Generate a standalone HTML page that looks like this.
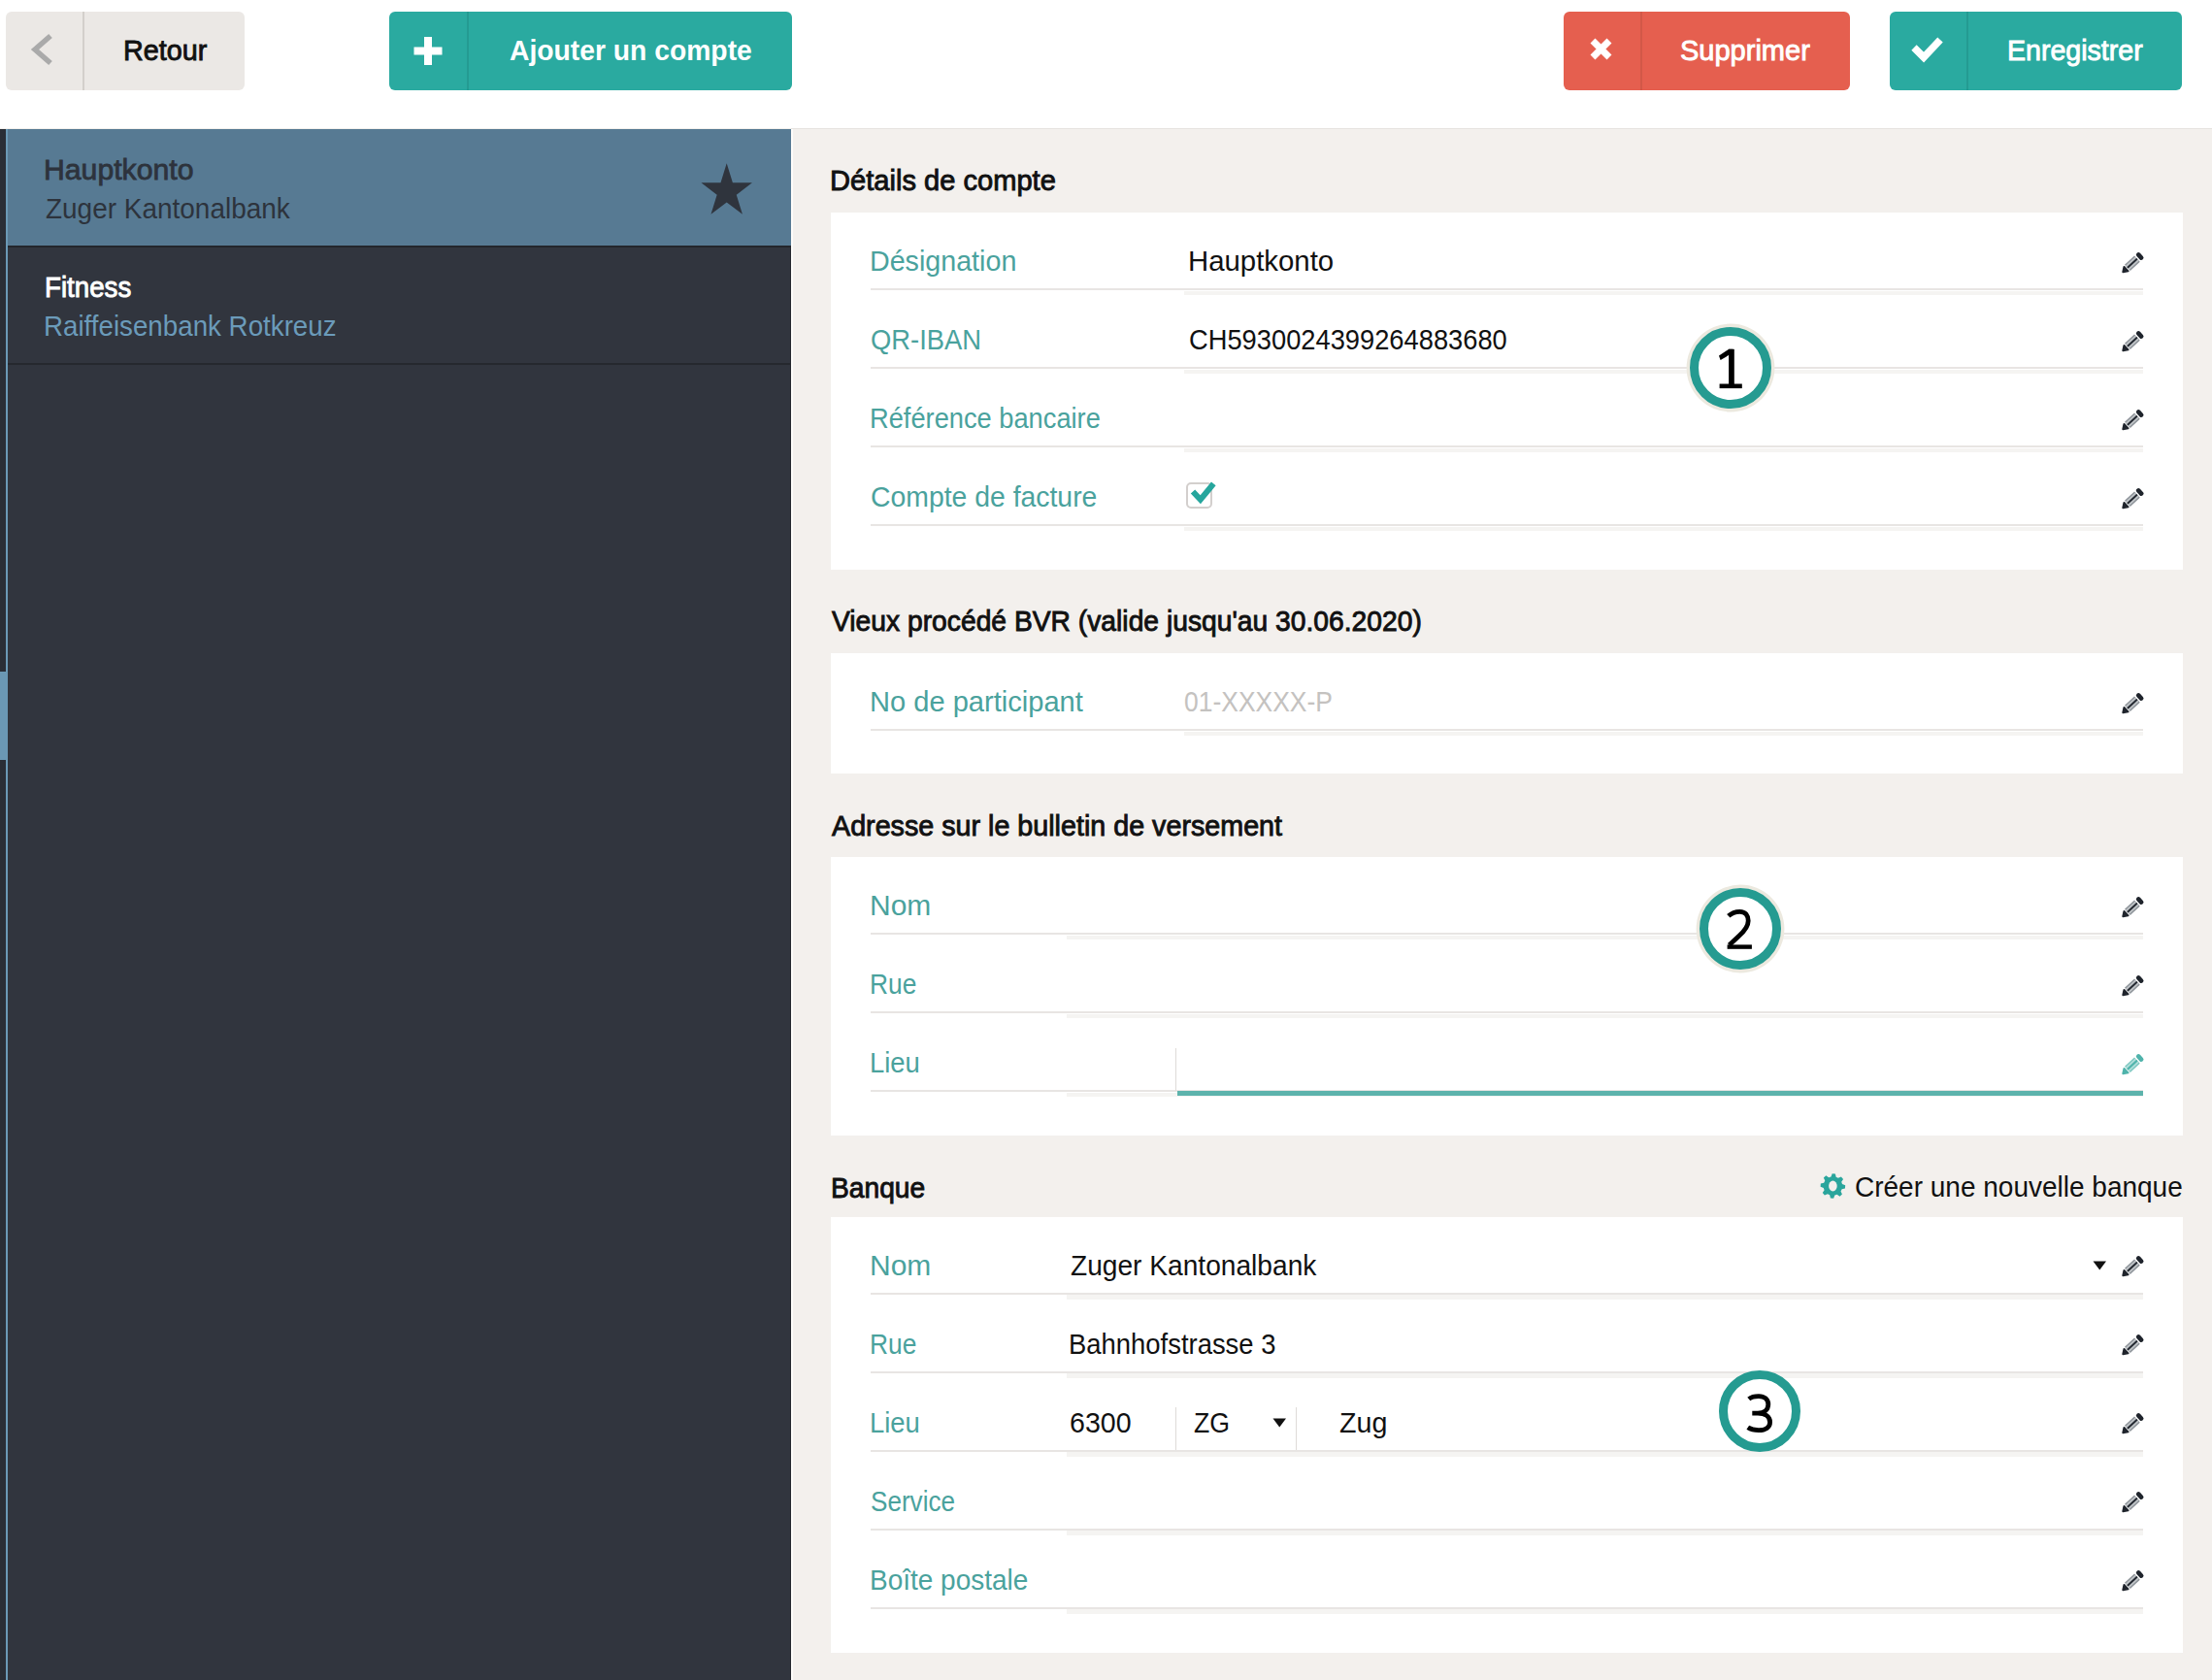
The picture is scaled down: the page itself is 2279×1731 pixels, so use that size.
<!DOCTYPE html>
<html><head><meta charset="utf-8">
<style>
html,body{margin:0;padding:0;}
body{width:2279px;height:1731px;position:relative;overflow:hidden;background:#f3f0ed;font-family:"Liberation Sans",sans-serif;}
.t{position:absolute;white-space:nowrap;}
.r{position:absolute;}
</style></head><body>
<div class="r" style="left:0.0px;top:0.0px;width:2279.0px;height:132.0px;background:#ffffff;"></div>
<div class="r" style="left:815.0px;top:132.0px;width:1464.0px;height:1.0px;background:#e6e3e0;"></div>
<div class="r" style="left:6.0px;top:12.0px;width:246.0px;height:81.0px;background:#ebe8e5;border-radius:6px;"></div>
<div class="r" style="left:85.3px;top:12.0px;width:2.0px;height:81.0px;background:#d3cfcb;"></div>
<svg class="r" style="left:28px;top:30px" width="32" height="42" viewBox="0 0 32 42"><path d="M24 7 L8 21 L24 35" fill="none" stroke="#aaaaaa" stroke-width="5.5" stroke-linecap="butt" stroke-linejoin="miter"/></svg>
<div class="t" style="left:127.49px;top:37.42px;font-size:29.5px;line-height:29.5px;font-weight:400;color:#111;-webkit-text-stroke:0.9px #111;transform:scale(0.9735,1.0);transform-origin:0 25.07px;">Retour</div>
<div class="r" style="left:401.0px;top:12.0px;width:415.0px;height:81.0px;background:#2aaaa0;border-radius:6px;"></div>
<div class="r" style="left:481.2px;top:12.0px;width:2.2px;height:81.0px;background:#249b92;"></div>
<svg class="r" style="left:426px;top:38px" width="30" height="30" viewBox="0 0 30 30"><path d="M15 0 V29 M0.5 14.5 H29.5" stroke="#fff" stroke-width="8"/></svg>
<div class="t" style="left:525.30px;top:38.14px;font-size:28.9px;line-height:28.9px;font-weight:700;color:#fff;transform:scale(0.9787,1.0);transform-origin:0 24.56px;">Ajouter un compte</div>
<div class="r" style="left:1611.0px;top:12.0px;width:295.0px;height:81.0px;background:#e55f4f;border-radius:6px;"></div>
<div class="r" style="left:1690.2px;top:12.0px;width:2.2px;height:81.0px;background:#d25848;"></div>
<svg class="r" style="left:1637px;top:38px" width="25" height="25" viewBox="0 0 25 25"><path d="M4 4 L21 21 M21 4 L4 21" stroke="#fff" stroke-width="7" stroke-linecap="butt"/></svg>
<div class="t" style="left:1731.06px;top:37.33px;font-size:29.5px;line-height:29.5px;font-weight:400;color:#fff;-webkit-text-stroke:0.9px #fff;transform:scale(0.9834,1.0);transform-origin:0 25.07px;">Supprimer</div>
<div class="r" style="left:1947.0px;top:12.0px;width:301.0px;height:81.0px;background:#2aaaa0;border-radius:6px;"></div>
<div class="r" style="left:2026.2px;top:12.0px;width:2.2px;height:81.0px;background:#249b92;"></div>
<svg class="r" style="left:1968px;top:34px" width="36" height="32" viewBox="0 0 36 32"><path d="M4 15 L14 25 L31 7" fill="none" stroke="#fff" stroke-width="7.5" stroke-linecap="butt" stroke-linejoin="miter"/></svg>
<div class="t" style="left:2068.20px;top:37.33px;font-size:29.5px;line-height:29.5px;font-weight:400;color:#fff;-webkit-text-stroke:0.9px #fff;transform:scale(0.9683,1.0);transform-origin:0 25.07px;">Enregistrer</div>
<div class="r" style="left:0.0px;top:133.0px;width:815.0px;height:1598.0px;background:#31353e;"></div>
<div class="r" style="left:0.0px;top:133.0px;width:6.0px;height:1598.0px;background:#2a2e36;"></div>
<div class="r" style="left:6.0px;top:133.0px;width:2.2px;height:1598.0px;background:#6b99b6;"></div>
<div class="r" style="left:0.0px;top:692.0px;width:8.0px;height:91.0px;background:#6b98b4;"></div>
<div class="r" style="left:8.0px;top:133.0px;width:807.0px;height:119.5px;background:#577a93;"></div>
<div class="r" style="left:813.6px;top:254.5px;width:1.4px;height:1476.5px;background:#252930;"></div>
<div class="r" style="left:815.0px;top:133.0px;width:2.2px;height:1598.0px;background:#fdfcfa;"></div>
<div class="r" style="left:8.0px;top:252.5px;width:807.0px;height:2.0px;background:#23262c;"></div>
<div class="r" style="left:8.0px;top:374.0px;width:807.0px;height:2.0px;background:#25282e;"></div>
<div class="t" style="left:45.36px;top:159.73px;font-size:29.5px;line-height:29.5px;font-weight:400;color:#2d333c;-webkit-text-stroke:0.8px #2d333c;transform:scale(1.0236,1.0);transform-origin:0 25.07px;">Hauptkonto</div>
<div class="t" style="left:47.00px;top:200.12px;font-size:29.5px;line-height:29.5px;font-weight:400;color:#2d333c;transform:scale(0.9476,1.0);transform-origin:0 25.07px;">Zuger Kantonalbank</div>
<div class="t" style="left:45.55px;top:280.73px;font-size:29.5px;line-height:29.5px;font-weight:400;color:#ffffff;-webkit-text-stroke:0.9px #ffffff;transform:scale(0.9385,1.0);transform-origin:0 25.07px;">Fitness</div>
<div class="t" style="left:45.12px;top:321.12px;font-size:29.5px;line-height:29.5px;font-weight:400;color:#6b9bba;transform:scale(0.9399,1.0);transform-origin:0 25.07px;">Raiffeisenbank Rotkreuz</div>
<svg class="r" style="left:0;top:0" width="815" height="300"><polygon points="748.70,168.30 754.90,188.34 774.96,188.34 758.73,200.72 764.93,220.76 748.70,208.38 732.47,220.76 738.67,200.72 722.44,188.34 742.50,188.34" fill="#2f343d"/></svg>
<div class="t" style="left:855.47px;top:171.12px;font-size:29.5px;line-height:29.5px;font-weight:400;color:#111;-webkit-text-stroke:0.9px #111;transform:scale(0.9863,1.0);transform-origin:0 25.07px;">Détails de compte</div>
<div class="r" style="left:856.0px;top:219.0px;width:1392.5px;height:368.0px;background:#ffffff;"></div>
<div class="t" style="left:896.06px;top:254.23px;font-size:29.5px;line-height:29.5px;font-weight:400;color:#4aa29d;transform:scale(0.9712,1.0);transform-origin:0 25.07px;">Désignation</div>
<div class="t" style="left:1223.51px;top:254.23px;font-size:29.5px;line-height:29.5px;font-weight:400;color:#111;transform:scale(0.9954,1.0);transform-origin:0 25.07px;">Hauptkonto</div>
<div class="r" style="left:897.0px;top:297.2px;width:1311.0px;height:2.3px;background:#e8e5e3;"></div>
<div class="r" style="left:1220.0px;top:299.5px;width:988.0px;height:4.5px;background:#f5f4f2;"></div>
<svg class="r" style="left:2185.0px;top:258.5px;overflow:visible" width="24" height="24" viewBox="0 0 24 24">
<g transform="translate(11.9 12.2) rotate(-43) scale(0.9)">
<path d="M-14.6 0 L-9.7 -3.4 L-9.7 3.4 Z" fill="#1f242c" stroke="#1f242c" stroke-width="2.2" stroke-linejoin="round"/>
<rect x="-7.6" y="-4.7" width="15.2" height="9.4" fill="#8c9298"/>
<rect x="-7.6" y="-3.1" width="15.2" height="1.7" fill="#c3c7ca"/>
<rect x="-7.6" y="1.4" width="15.2" height="1.7" fill="#c3c7ca"/>
<rect x="-7.6" y="-0.9" width="15.2" height="1.8" fill="#1f242c"/>
<rect x="9.2" y="-5.0" width="5.2" height="10" rx="2.6" fill="#1f242c"/>
</g></svg>
<div class="t" style="left:897.07px;top:335.23px;font-size:29.5px;line-height:29.5px;font-weight:400;color:#4aa29d;transform:scale(0.9279,1.0);transform-origin:0 25.07px;">QR-IBAN</div>
<div class="t" style="left:1224.57px;top:335.23px;font-size:29.5px;line-height:29.5px;font-weight:400;color:#111;transform:scale(0.9251,1.0);transform-origin:0 25.07px;">CH5930024399264883680</div>
<div class="r" style="left:897.0px;top:378.2px;width:1311.0px;height:2.3px;background:#e8e5e3;"></div>
<div class="r" style="left:1220.0px;top:380.5px;width:988.0px;height:4.5px;background:#f5f4f2;"></div>
<svg class="r" style="left:2185.0px;top:339.5px;overflow:visible" width="24" height="24" viewBox="0 0 24 24">
<g transform="translate(11.9 12.2) rotate(-43) scale(0.9)">
<path d="M-14.6 0 L-9.7 -3.4 L-9.7 3.4 Z" fill="#1f242c" stroke="#1f242c" stroke-width="2.2" stroke-linejoin="round"/>
<rect x="-7.6" y="-4.7" width="15.2" height="9.4" fill="#8c9298"/>
<rect x="-7.6" y="-3.1" width="15.2" height="1.7" fill="#c3c7ca"/>
<rect x="-7.6" y="1.4" width="15.2" height="1.7" fill="#c3c7ca"/>
<rect x="-7.6" y="-0.9" width="15.2" height="1.8" fill="#1f242c"/>
<rect x="9.2" y="-5.0" width="5.2" height="10" rx="2.6" fill="#1f242c"/>
</g></svg>
<div class="t" style="left:896.15px;top:416.23px;font-size:29.5px;line-height:29.5px;font-weight:400;color:#4aa29d;transform:scale(0.9237,1.0);transform-origin:0 25.07px;">Référence bancaire</div>
<div class="r" style="left:897.0px;top:459.2px;width:1311.0px;height:2.3px;background:#e8e5e3;"></div>
<div class="r" style="left:1220.0px;top:461.5px;width:988.0px;height:4.5px;background:#f5f4f2;"></div>
<svg class="r" style="left:2185.0px;top:420.5px;overflow:visible" width="24" height="24" viewBox="0 0 24 24">
<g transform="translate(11.9 12.2) rotate(-43) scale(0.9)">
<path d="M-14.6 0 L-9.7 -3.4 L-9.7 3.4 Z" fill="#1f242c" stroke="#1f242c" stroke-width="2.2" stroke-linejoin="round"/>
<rect x="-7.6" y="-4.7" width="15.2" height="9.4" fill="#8c9298"/>
<rect x="-7.6" y="-3.1" width="15.2" height="1.7" fill="#c3c7ca"/>
<rect x="-7.6" y="1.4" width="15.2" height="1.7" fill="#c3c7ca"/>
<rect x="-7.6" y="-0.9" width="15.2" height="1.8" fill="#1f242c"/>
<rect x="9.2" y="-5.0" width="5.2" height="10" rx="2.6" fill="#1f242c"/>
</g></svg>
<div class="t" style="left:897.04px;top:497.22px;font-size:29.5px;line-height:29.5px;font-weight:400;color:#4aa29d;transform:scale(0.9616,1.0);transform-origin:0 25.07px;">Compte de facture</div>
<div class="r" style="left:897.0px;top:540.2px;width:1311.0px;height:2.3px;background:#e8e5e3;"></div>
<div class="r" style="left:1220.0px;top:542.5px;width:988.0px;height:4.5px;background:#f5f4f2;"></div>
<svg class="r" style="left:2185.0px;top:501.5px;overflow:visible" width="24" height="24" viewBox="0 0 24 24">
<g transform="translate(11.9 12.2) rotate(-43) scale(0.9)">
<path d="M-14.6 0 L-9.7 -3.4 L-9.7 3.4 Z" fill="#1f242c" stroke="#1f242c" stroke-width="2.2" stroke-linejoin="round"/>
<rect x="-7.6" y="-4.7" width="15.2" height="9.4" fill="#8c9298"/>
<rect x="-7.6" y="-3.1" width="15.2" height="1.7" fill="#c3c7ca"/>
<rect x="-7.6" y="1.4" width="15.2" height="1.7" fill="#c3c7ca"/>
<rect x="-7.6" y="-0.9" width="15.2" height="1.8" fill="#1f242c"/>
<rect x="9.2" y="-5.0" width="5.2" height="10" rx="2.6" fill="#1f242c"/>
</g></svg>
<div class="r" style="left:1221.5px;top:496.5px;width:27.0px;height:27.5px;background:#fff;box-sizing:border-box;border:2px solid #d3cfcd;border-radius:5px;"></div>
<svg class="r" style="left:1220px;top:490px" width="40" height="36" viewBox="0 0 40 36"><path d="M9 16.5 L16.8 24.8 L30.3 8.4" fill="none" stroke="#26a69d" stroke-width="6" stroke-linejoin="miter" stroke-linecap="butt"/></svg>
<div class="t" style="left:857.43px;top:625.22px;font-size:29.5px;line-height:29.5px;font-weight:400;color:#111;-webkit-text-stroke:0.9px #111;transform:scale(0.9575,1.0);transform-origin:0 25.07px;">Vieux procédé BVR (valide jusqu'au 30.06.2020)</div>
<div class="r" style="left:856.0px;top:672.5px;width:1392.5px;height:124.0px;background:#ffffff;"></div>
<div class="t" style="left:896.03px;top:708.22px;font-size:29.5px;line-height:29.5px;font-weight:400;color:#4aa29d;transform:scale(0.9858,1.0);transform-origin:0 25.07px;">No de participant</div>
<div class="t" style="left:1220.10px;top:708.22px;font-size:29.5px;line-height:29.5px;font-weight:400;color:#c4c2c0;transform:scale(0.8967,1.0);transform-origin:0 25.07px;">01-XXXXX-P</div>
<div class="r" style="left:897.0px;top:751.2px;width:1311.0px;height:2.3px;background:#e8e5e3;"></div>
<div class="r" style="left:1220.0px;top:753.5px;width:988.0px;height:4.5px;background:#f5f4f2;"></div>
<svg class="r" style="left:2185.0px;top:712.5px;overflow:visible" width="24" height="24" viewBox="0 0 24 24">
<g transform="translate(11.9 12.2) rotate(-43) scale(0.9)">
<path d="M-14.6 0 L-9.7 -3.4 L-9.7 3.4 Z" fill="#1f242c" stroke="#1f242c" stroke-width="2.2" stroke-linejoin="round"/>
<rect x="-7.6" y="-4.7" width="15.2" height="9.4" fill="#8c9298"/>
<rect x="-7.6" y="-3.1" width="15.2" height="1.7" fill="#c3c7ca"/>
<rect x="-7.6" y="1.4" width="15.2" height="1.7" fill="#c3c7ca"/>
<rect x="-7.6" y="-0.9" width="15.2" height="1.8" fill="#1f242c"/>
<rect x="9.2" y="-5.0" width="5.2" height="10" rx="2.6" fill="#1f242c"/>
</g></svg>
<div class="t" style="left:857.44px;top:835.72px;font-size:29.5px;line-height:29.5px;font-weight:400;color:#111;-webkit-text-stroke:0.9px #111;transform:scale(0.9725,1.0);transform-origin:0 25.07px;">Adresse sur le bulletin de versement</div>
<div class="r" style="left:856.0px;top:882.5px;width:1392.5px;height:287.0px;background:#ffffff;"></div>
<div class="t" style="left:895.97px;top:918.22px;font-size:29.5px;line-height:29.5px;font-weight:400;color:#4aa29d;transform:scale(1.0169,1.0);transform-origin:0 25.07px;">Nom</div>
<div class="r" style="left:897.0px;top:961.2px;width:1311.0px;height:2.3px;background:#e8e5e3;"></div>
<div class="r" style="left:1099.0px;top:963.5px;width:1109.0px;height:4.5px;background:#f5f4f2;"></div>
<svg class="r" style="left:2185.0px;top:922.5px;overflow:visible" width="24" height="24" viewBox="0 0 24 24">
<g transform="translate(11.9 12.2) rotate(-43) scale(0.9)">
<path d="M-14.6 0 L-9.7 -3.4 L-9.7 3.4 Z" fill="#1f242c" stroke="#1f242c" stroke-width="2.2" stroke-linejoin="round"/>
<rect x="-7.6" y="-4.7" width="15.2" height="9.4" fill="#8c9298"/>
<rect x="-7.6" y="-3.1" width="15.2" height="1.7" fill="#c3c7ca"/>
<rect x="-7.6" y="1.4" width="15.2" height="1.7" fill="#c3c7ca"/>
<rect x="-7.6" y="-0.9" width="15.2" height="1.8" fill="#1f242c"/>
<rect x="9.2" y="-5.0" width="5.2" height="10" rx="2.6" fill="#1f242c"/>
</g></svg>
<div class="t" style="left:896.21px;top:999.22px;font-size:29.5px;line-height:29.5px;font-weight:400;color:#4aa29d;transform:scale(0.8934,1.0);transform-origin:0 25.07px;">Rue</div>
<div class="r" style="left:897.0px;top:1042.2px;width:1311.0px;height:2.3px;background:#e8e5e3;"></div>
<div class="r" style="left:1099.0px;top:1044.5px;width:1109.0px;height:4.5px;background:#f5f4f2;"></div>
<svg class="r" style="left:2185.0px;top:1003.5px;overflow:visible" width="24" height="24" viewBox="0 0 24 24">
<g transform="translate(11.9 12.2) rotate(-43) scale(0.9)">
<path d="M-14.6 0 L-9.7 -3.4 L-9.7 3.4 Z" fill="#1f242c" stroke="#1f242c" stroke-width="2.2" stroke-linejoin="round"/>
<rect x="-7.6" y="-4.7" width="15.2" height="9.4" fill="#8c9298"/>
<rect x="-7.6" y="-3.1" width="15.2" height="1.7" fill="#c3c7ca"/>
<rect x="-7.6" y="1.4" width="15.2" height="1.7" fill="#c3c7ca"/>
<rect x="-7.6" y="-0.9" width="15.2" height="1.8" fill="#1f242c"/>
<rect x="9.2" y="-5.0" width="5.2" height="10" rx="2.6" fill="#1f242c"/>
</g></svg>
<div class="t" style="left:896.14px;top:1080.22px;font-size:29.5px;line-height:29.5px;font-weight:400;color:#4aa29d;transform:scale(0.9300,1.0);transform-origin:0 25.07px;">Lieu</div>
<div class="r" style="left:897.0px;top:1123.2px;width:1311.0px;height:2.3px;background:#e8e5e3;"></div>
<div class="r" style="left:1099.0px;top:1125.5px;width:1109.0px;height:4.5px;background:#f5f4f2;"></div>
<svg class="r" style="left:2185.0px;top:1084.5px;overflow:visible" width="24" height="24" viewBox="0 0 24 24">
<g transform="translate(11.9 12.2) rotate(-43) scale(0.9)">
<path d="M-14.6 0 L-9.7 -3.4 L-9.7 3.4 Z" fill="#4fb3ab" stroke="#4fb3ab" stroke-width="2.2" stroke-linejoin="round"/>
<rect x="-7.6" y="-4.7" width="15.2" height="9.4" fill="#7cc7c0"/>
<rect x="-7.6" y="-3.1" width="15.2" height="1.7" fill="#b5e0dc"/>
<rect x="-7.6" y="1.4" width="15.2" height="1.7" fill="#b5e0dc"/>
<rect x="-7.6" y="-0.9" width="15.2" height="1.8" fill="#4fb3ab"/>
<rect x="9.2" y="-5.0" width="5.2" height="10" rx="2.6" fill="#4fb3ab"/>
</g></svg>
<div class="r" style="left:1210.5px;top:1080.0px;width:1.2px;height:44.0px;background:#dedbd8;"></div>
<div class="r" style="left:1212.5px;top:1123.5px;width:995.5px;height:5.5px;background:#5db3ac;"></div>
<div class="t" style="left:855.52px;top:1208.72px;font-size:29.5px;line-height:29.5px;font-weight:400;color:#111;-webkit-text-stroke:0.9px #111;transform:scale(0.9561,1.0);transform-origin:0 25.07px;">Banque</div>
<svg class="r" style="left:0;top:0;overflow:visible" width="1" height="1"><polygon points="1886.49,1212.39 1887.70,1209.22 1890.90,1209.45 1891.65,1212.75 1893.84,1213.85 1896.94,1212.47 1899.04,1214.89 1897.23,1217.76 1898.01,1220.09 1901.18,1221.30 1900.95,1224.50 1897.65,1225.25 1896.55,1227.44 1897.93,1230.54 1895.51,1232.64 1892.64,1230.83 1890.31,1231.61 1889.10,1234.78 1885.90,1234.55 1885.15,1231.25 1882.96,1230.15 1879.86,1231.53 1877.76,1229.11 1879.57,1226.24 1878.79,1223.91 1875.62,1222.70 1875.85,1219.50 1879.15,1218.75 1880.25,1216.56 1878.87,1213.46 1881.29,1211.36 1884.16,1213.17" fill="#2aa59c"/><ellipse cx="1888.4" cy="1222" rx="4.3" ry="5.4" fill="#f3f0ed"/></svg>
<div class="t" style="left:1911.15px;top:1208.12px;font-size:29.5px;line-height:29.5px;font-weight:400;color:#111;transform:scale(0.9490,1.0);transform-origin:0 25.07px;">Créer une nouvelle banque</div>
<div class="r" style="left:856.0px;top:1253.5px;width:1392.5px;height:449.0px;background:#ffffff;"></div>
<div class="t" style="left:895.97px;top:1288.72px;font-size:29.5px;line-height:29.5px;font-weight:400;color:#4aa29d;transform:scale(1.0169,1.0);transform-origin:0 25.07px;">Nom</div>
<div class="t" style="left:1102.80px;top:1288.72px;font-size:29.5px;line-height:29.5px;font-weight:400;color:#111;transform:scale(0.9536,1.0);transform-origin:0 25.07px;">Zuger Kantonalbank</div>
<div class="r" style="left:897.0px;top:1331.7px;width:1311.0px;height:2.3px;background:#e8e5e3;"></div>
<div class="r" style="left:1099.0px;top:1334.0px;width:1109.0px;height:4.5px;background:#f5f4f2;"></div>
<svg class="r" style="left:2185.0px;top:1293.0px;overflow:visible" width="24" height="24" viewBox="0 0 24 24">
<g transform="translate(11.9 12.2) rotate(-43) scale(0.9)">
<path d="M-14.6 0 L-9.7 -3.4 L-9.7 3.4 Z" fill="#1f242c" stroke="#1f242c" stroke-width="2.2" stroke-linejoin="round"/>
<rect x="-7.6" y="-4.7" width="15.2" height="9.4" fill="#8c9298"/>
<rect x="-7.6" y="-3.1" width="15.2" height="1.7" fill="#c3c7ca"/>
<rect x="-7.6" y="1.4" width="15.2" height="1.7" fill="#c3c7ca"/>
<rect x="-7.6" y="-0.9" width="15.2" height="1.8" fill="#1f242c"/>
<rect x="9.2" y="-5.0" width="5.2" height="10" rx="2.6" fill="#1f242c"/>
</g></svg>
<div class="t" style="left:896.21px;top:1369.72px;font-size:29.5px;line-height:29.5px;font-weight:400;color:#4aa29d;transform:scale(0.8934,1.0);transform-origin:0 25.07px;">Rue</div>
<div class="t" style="left:1100.94px;top:1369.72px;font-size:29.5px;line-height:29.5px;font-weight:400;color:#111;transform:scale(0.9296,1.0);transform-origin:0 25.07px;">Bahnhofstrasse 3</div>
<div class="r" style="left:897.0px;top:1412.7px;width:1311.0px;height:2.3px;background:#e8e5e3;"></div>
<div class="r" style="left:1099.0px;top:1415.0px;width:1109.0px;height:4.5px;background:#f5f4f2;"></div>
<svg class="r" style="left:2185.0px;top:1374.0px;overflow:visible" width="24" height="24" viewBox="0 0 24 24">
<g transform="translate(11.9 12.2) rotate(-43) scale(0.9)">
<path d="M-14.6 0 L-9.7 -3.4 L-9.7 3.4 Z" fill="#1f242c" stroke="#1f242c" stroke-width="2.2" stroke-linejoin="round"/>
<rect x="-7.6" y="-4.7" width="15.2" height="9.4" fill="#8c9298"/>
<rect x="-7.6" y="-3.1" width="15.2" height="1.7" fill="#c3c7ca"/>
<rect x="-7.6" y="1.4" width="15.2" height="1.7" fill="#c3c7ca"/>
<rect x="-7.6" y="-0.9" width="15.2" height="1.8" fill="#1f242c"/>
<rect x="9.2" y="-5.0" width="5.2" height="10" rx="2.6" fill="#1f242c"/>
</g></svg>
<div class="t" style="left:896.14px;top:1450.72px;font-size:29.5px;line-height:29.5px;font-weight:400;color:#4aa29d;transform:scale(0.9300,1.0);transform-origin:0 25.07px;">Lieu</div>
<div class="t" style="left:1101.83px;top:1450.72px;font-size:29.5px;line-height:29.5px;font-weight:400;color:#111;transform:scale(0.9686,1.0);transform-origin:0 25.07px;">6300</div>
<div class="r" style="left:897.0px;top:1493.7px;width:1311.0px;height:2.3px;background:#e8e5e3;"></div>
<div class="r" style="left:1099.0px;top:1496.0px;width:1109.0px;height:4.5px;background:#f5f4f2;"></div>
<svg class="r" style="left:2185.0px;top:1455.0px;overflow:visible" width="24" height="24" viewBox="0 0 24 24">
<g transform="translate(11.9 12.2) rotate(-43) scale(0.9)">
<path d="M-14.6 0 L-9.7 -3.4 L-9.7 3.4 Z" fill="#1f242c" stroke="#1f242c" stroke-width="2.2" stroke-linejoin="round"/>
<rect x="-7.6" y="-4.7" width="15.2" height="9.4" fill="#8c9298"/>
<rect x="-7.6" y="-3.1" width="15.2" height="1.7" fill="#c3c7ca"/>
<rect x="-7.6" y="1.4" width="15.2" height="1.7" fill="#c3c7ca"/>
<rect x="-7.6" y="-0.9" width="15.2" height="1.8" fill="#1f242c"/>
<rect x="9.2" y="-5.0" width="5.2" height="10" rx="2.6" fill="#1f242c"/>
</g></svg>
<div class="t" style="left:1230.40px;top:1450.72px;font-size:29.5px;line-height:29.5px;font-weight:400;color:#111;transform:scale(0.9047,1.0);transform-origin:0 25.07px;">ZG</div>
<div class="t" style="left:1380.00px;top:1450.72px;font-size:29.5px;line-height:29.5px;font-weight:400;color:#111;transform:scale(0.9711,1.0);transform-origin:0 25.07px;">Zug</div>
<div class="r" style="left:1210.5px;top:1450.0px;width:1.2px;height:44.0px;background:#dedbd8;"></div>
<div class="r" style="left:1334.5px;top:1450.0px;width:1.2px;height:44.0px;background:#dedbd8;"></div>
<svg class="r" style="left:1311px;top:1461px" width="15" height="10" viewBox="0 0 15 10"><path d="M0.5 0.5 H14 L7.25 9.5 Z" fill="#111"/></svg>
<svg class="r" style="left:2156px;top:1298.5px" width="15" height="10" viewBox="0 0 15 10"><path d="M0.5 0.5 H14 L7.25 9.5 Z" fill="#111"/></svg>
<div class="t" style="left:897.12px;top:1531.72px;font-size:29.5px;line-height:29.5px;font-weight:400;color:#4aa29d;transform:scale(0.8844,1.0);transform-origin:0 25.07px;">Service</div>
<div class="r" style="left:897.0px;top:1574.7px;width:1311.0px;height:2.3px;background:#e8e5e3;"></div>
<div class="r" style="left:1099.0px;top:1577.0px;width:1109.0px;height:4.5px;background:#f5f4f2;"></div>
<svg class="r" style="left:2185.0px;top:1536.0px;overflow:visible" width="24" height="24" viewBox="0 0 24 24">
<g transform="translate(11.9 12.2) rotate(-43) scale(0.9)">
<path d="M-14.6 0 L-9.7 -3.4 L-9.7 3.4 Z" fill="#1f242c" stroke="#1f242c" stroke-width="2.2" stroke-linejoin="round"/>
<rect x="-7.6" y="-4.7" width="15.2" height="9.4" fill="#8c9298"/>
<rect x="-7.6" y="-3.1" width="15.2" height="1.7" fill="#c3c7ca"/>
<rect x="-7.6" y="1.4" width="15.2" height="1.7" fill="#c3c7ca"/>
<rect x="-7.6" y="-0.9" width="15.2" height="1.8" fill="#1f242c"/>
<rect x="9.2" y="-5.0" width="5.2" height="10" rx="2.6" fill="#1f242c"/>
</g></svg>
<div class="t" style="left:896.10px;top:1612.72px;font-size:29.5px;line-height:29.5px;font-weight:400;color:#4aa29d;transform:scale(0.9482,1.0);transform-origin:0 25.07px;">Boîte postale</div>
<div class="r" style="left:897.0px;top:1655.7px;width:1311.0px;height:2.3px;background:#e8e5e3;"></div>
<div class="r" style="left:1099.0px;top:1658.0px;width:1109.0px;height:4.5px;background:#f5f4f2;"></div>
<svg class="r" style="left:2185.0px;top:1617.0px;overflow:visible" width="24" height="24" viewBox="0 0 24 24">
<g transform="translate(11.9 12.2) rotate(-43) scale(0.9)">
<path d="M-14.6 0 L-9.7 -3.4 L-9.7 3.4 Z" fill="#1f242c" stroke="#1f242c" stroke-width="2.2" stroke-linejoin="round"/>
<rect x="-7.6" y="-4.7" width="15.2" height="9.4" fill="#8c9298"/>
<rect x="-7.6" y="-3.1" width="15.2" height="1.7" fill="#c3c7ca"/>
<rect x="-7.6" y="1.4" width="15.2" height="1.7" fill="#c3c7ca"/>
<rect x="-7.6" y="-0.9" width="15.2" height="1.8" fill="#1f242c"/>
<rect x="9.2" y="-5.0" width="5.2" height="10" rx="2.6" fill="#1f242c"/>
</g></svg>
<svg class="r" style="left:1735.0px;top:331.0px" width="96" height="96" viewBox="0 0 96 96"><circle cx="48" cy="48" r="45.4" fill="#ece9df"/><circle cx="48" cy="48" r="37.5" fill="#fff" stroke="#259b91" stroke-width="9"/><rect x="46.1" y="28.8" width="5.7" height="38" fill="#000"/><polygon points="46.1,28.8 50.5,28.8 46.8,34.6 37.6,40 36,35.6" fill="#000"/><rect x="36.6" y="64.5" width="23.2" height="4.6" fill="#000"/></svg>
<svg class="r" style="left:1745.0px;top:909.0px" width="96" height="96" viewBox="0 0 96 96"><circle cx="48" cy="48" r="45.4" fill="#ece9df"/><circle cx="48" cy="48" r="37.5" fill="#fff" stroke="#259b91" stroke-width="9"/><path d="M35.8 34.8 C39 31.8 43.2 30.3 47.5 30.3 C53.5 30.3 56.2 34.5 56.2 39.8 C56.2 45.5 52.8 50 46.5 55.5 L36.6 64.8" fill="none" stroke="#000" stroke-width="4.8"/><rect x="34.6" y="64.4" width="25.3" height="4.4" fill="#000"/></svg>
<svg class="r" style="left:1764.5px;top:1406.2px" width="96" height="96" viewBox="0 0 96 96"><circle cx="48" cy="48" r="37.5" fill="#fff" stroke="#259b91" stroke-width="9"/><path d="M36.8 35.5 C39.5 33.3 43.5 32.6 47 32.6 C53 32.6 56.8 36 56.8 41 C56.8 46.5 52.5 50.2 46 50.2 L40.3 50.2 M46 50.2 C54 50.2 58.6 54 58.6 59.3 C58.6 64.8 54 67.7 47 67.7 C42.5 67.7 38.8 66.8 35.8 64.8" fill="none" stroke="#000" stroke-width="4.8"/></svg>
</body></html>
